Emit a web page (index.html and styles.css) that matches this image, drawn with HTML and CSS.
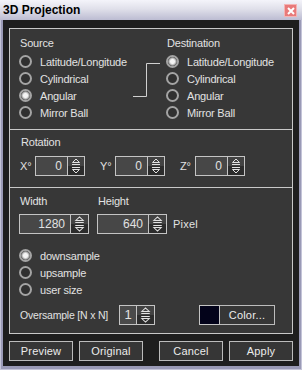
FILE: index.html
```html
<!DOCTYPE html>
<html lang="en">
<head>
    <meta charset="UTF-8">
    <meta name="viewport" content="width=device-width, initial-scale=1.0">
    <title>3D Projection</title>
    <link rel="stylesheet" href="styles.css">
</head>
<body>
    <svg class="defs" width="0" height="0">
        <symbol id="arrows" viewBox="0 0 16 18" preserveAspectRatio="none">
            <rect width="16" height="9" fill="#424242"/>
            <rect y="9" width="16" height="9" fill="#2c2c2c"/>
            <path d="M4.5 5.5 L8 2 L11.5 5.5 Z M4 7.5 H12 M4 10.5 H12 M4.5 12.5 L8 16 L11.5 12.5 Z" fill="none" stroke="#e2e2e2"/>
        </symbol>
    </svg>

    <div class="window">
        <div class="titlebar">
            <span class="title">3D Projection</span>
            <span class="close">
                <svg width="10" height="10" viewBox="0 0 10 10"><path d="M2 2 L8 8 M8 2 L2 8" stroke="#fff" stroke-width="2"/></svg>
            </span>
        </div>

        <div class="client">
            <div class="panel">
                <!-- source / destination -->
                <div class="section proj">
                    <div class="col src">
                        <div class="head">Source</div>
                        <div class="opt"><span class="radio"></span>Latitude/Longitude</div>
                        <div class="opt"><span class="radio"></span>Cylindrical</div>
                        <div class="opt"><span class="radio on"></span>Angular</div>
                        <div class="opt"><span class="radio"></span>Mirror Ball</div>
                    </div>
                    <svg class="link" width="33" height="68" viewBox="0 0 33 68">
                        <path d="M0 43.5 H13.5 V10.5 H27" fill="none" stroke="#d0d0d0"/>
                    </svg>
                    <div class="col">
                        <div class="head">Destination</div>
                        <div class="opt"><span class="radio on"></span>Latitude/Longitude</div>
                        <div class="opt"><span class="radio"></span>Cylindrical</div>
                        <div class="opt"><span class="radio"></span>Angular</div>
                        <div class="opt"><span class="radio"></span>Mirror Ball</div>
                    </div>
                </div>

                <!-- rotation -->
                <div class="section rot">
                    <div class="head">Rotation</div>
                    <div class="rot-row">
                        <span class="axis">X°</span>
                        <div class="spin"><span class="field">0</span><svg class="arr"><use href="#arrows"/></svg></div>
                        <span class="axis">Y°</span>
                        <div class="spin"><span class="field">0</span><svg class="arr"><use href="#arrows"/></svg></div>
                        <span class="axis">Z°</span>
                        <div class="spin"><span class="field">0</span><svg class="arr"><use href="#arrows"/></svg></div>
                    </div>
                </div>

                <!-- size -->
                <div class="section size">
                    <div class="size-grid">
                        <div class="head">Width</div>
                        <div class="head">Height</div>
                        <div></div>
                        <div class="spin wide"><span class="field">1280</span><svg class="arr"><use href="#arrows"/></svg></div>
                        <div class="spin wide"><span class="field">640</span><svg class="arr"><use href="#arrows"/></svg></div>
                        <span class="unit">Pixel</span>
                    </div>

                    <div class="samples">
                        <div class="opt"><span class="radio on"></span>downsample</div>
                        <div class="opt"><span class="radio"></span>upsample</div>
                        <div class="opt"><span class="radio"></span>user size</div>
                    </div>

                    <div class="os-row">
                        <span class="os-label">Oversample [N x N]</span>
                        <div class="spin small"><span class="field">1</span><svg class="arr"><use href="#arrows"/></svg></div>
                        <span class="swatch"></span>
                        <button class="btn color">Color...</button>
                    </div>
                </div>
            </div>

            <div class="actions">
                <div class="group">
                    <button class="btn">Preview</button>
                    <button class="btn">Original</button>
                </div>
                <div class="group">
                    <button class="btn">Cancel</button>
                    <button class="btn">Apply</button>
                </div>
            </div>
        </div>
    </div>
</body>
</html>
```

FILE: styles.css
```css
* {
    box-sizing: border-box;
}
body {
    margin: 0;
    font-family: "Liberation Sans", Arial, sans-serif;
    font-size: 11px;
    letter-spacing: -0.2px;
    color: #e2e2e2;
}
.defs {
    position: absolute;
}

.window {
    width: 302px;
    height: 370px;
    display: flex;
    flex-direction: column;
    background: #9a9ab6;
    box-shadow: inset 1px 0 #c4c4d8, inset -1px 0 #c4c4d8, inset 0 -1px #c4c4d8;
}
.titlebar {
    height: 20px;
    display: flex;
    justify-content: space-between;
    padding: 0 5px 0 3px;
    background: linear-gradient(#f4f4fa, #e0e0ea 45%, #bcbcd2);
}
.title {
    font-weight: bold;
    font-size: 12px;
    letter-spacing: 0;
    line-height: 21px;
    color: #000;
}
.close {
    width: 13px;
    height: 13px;
    margin-top: 4px;
    display: flex;
    align-items: center;
    justify-content: center;
    background: #e87a7a;
    border: 1px solid #f4b4b4;
}
.close svg {
    display: block;
}

.client {
    flex: 1;
    margin: 0 3px 4px;
    padding: 8px 6px 5px;
    background: #1e1e1e;
}
.panel {
    height: 306px;
    border: 1px solid #c8c8c8;
    background: #373737;
}
.section {
    border-bottom: 1px solid #c8c8c8;
}
.section:last-child {
    border-bottom: none;
}
.head {
    line-height: 14px;
    padding-left: 1px;
}

/* radios */
.opt {
    height: 17px;
    display: flex;
    align-items: center;
    white-space: nowrap;
}
.radio {
    width: 13px;
    height: 13px;
    margin-right: 8px;
    border-radius: 50%;
    border: 2px solid #a4a4a4;
    background: #303030;
    flex: none;
}
.radio.on {
    background: radial-gradient(circle, #f4f4f4 0 2px, #c8c8c8 3px, #8a8a8a 4px, #303030 4.6px);
}

/* source / destination */
.proj {
    height: 101px;
    display: flex;
    padding: 7px 0 0 9px;
}
.proj .head {
    margin-bottom: 3px;
}
.src {
    width: 114px;
}
.link {
    margin-top: 17px;
    flex: none;
}

/* spinners */
.spin {
    width: 50px;
    height: 20px;
    display: flex;
    border: 1px solid #c4c4c4;
    flex: none;
}
.field {
    flex: 1;
    line-height: 18px;
    text-align: right;
    padding-right: 5px;
    background: #474747;
    border-right: 1px solid #c4c4c4;
    font-size: 12px;
    letter-spacing: 0;
}
.arr {
    width: 16px;
    height: 18px;
    display: block;
    flex: none;
}
.spin.wide {
    width: 70px;
}
.spin.wide .arr,
.spin.small .arr {
    width: 17px;
}
.spin.small {
    width: 36px;
}
.spin.small .field {
    text-align: center;
    padding: 0;
    font-size: 13px;
    background: #4a4a4a;
}

/* rotation */
.rot {
    height: 58px;
    padding: 5px 0 0 10px;
}
.rot-row {
    display: flex;
    align-items: center;
    margin-top: 7px;
}
.axis {
    width: 15px;
    margin-left: 15px;
}
.axis:first-child {
    margin-left: 0;
}

/* size */
.size {
    padding: 6px 0 0 9px;
}
.size-grid {
    display: grid;
    grid-template-columns: 70px 70px auto;
    column-gap: 8px;
    row-gap: 6px;
    align-items: center;
}
.unit {
    margin-left: -2px;
    letter-spacing: 0.2px;
}
.samples {
    margin-top: 13px;
}
.os-row {
    display: flex;
    align-items: center;
    margin-top: 7px;
    padding-left: 1px;
}
.os-label {
    width: 99px;
    font-size: 10.5px;
}
.swatch {
    width: 21px;
    height: 20px;
    margin-left: 44px;
    border: 1px solid #c4c4c4;
    background: #03031a;
}

/* buttons */
.btn {
    width: 64px;
    height: 20px;
    padding: 0;
    border: 1px solid #bcbcbc;
    background: #363636;
    color: #ececec;
    font-family: "Liberation Sans", Arial, sans-serif;
    font-size: 11px;
    letter-spacing: 0.2px;
}
.btn.color {
    width: 55px;
    border-left: none;
}
.actions {
    display: flex;
    justify-content: space-between;
    margin-top: 7px;
}
.group {
    display: flex;
    gap: 6px;
}
```
